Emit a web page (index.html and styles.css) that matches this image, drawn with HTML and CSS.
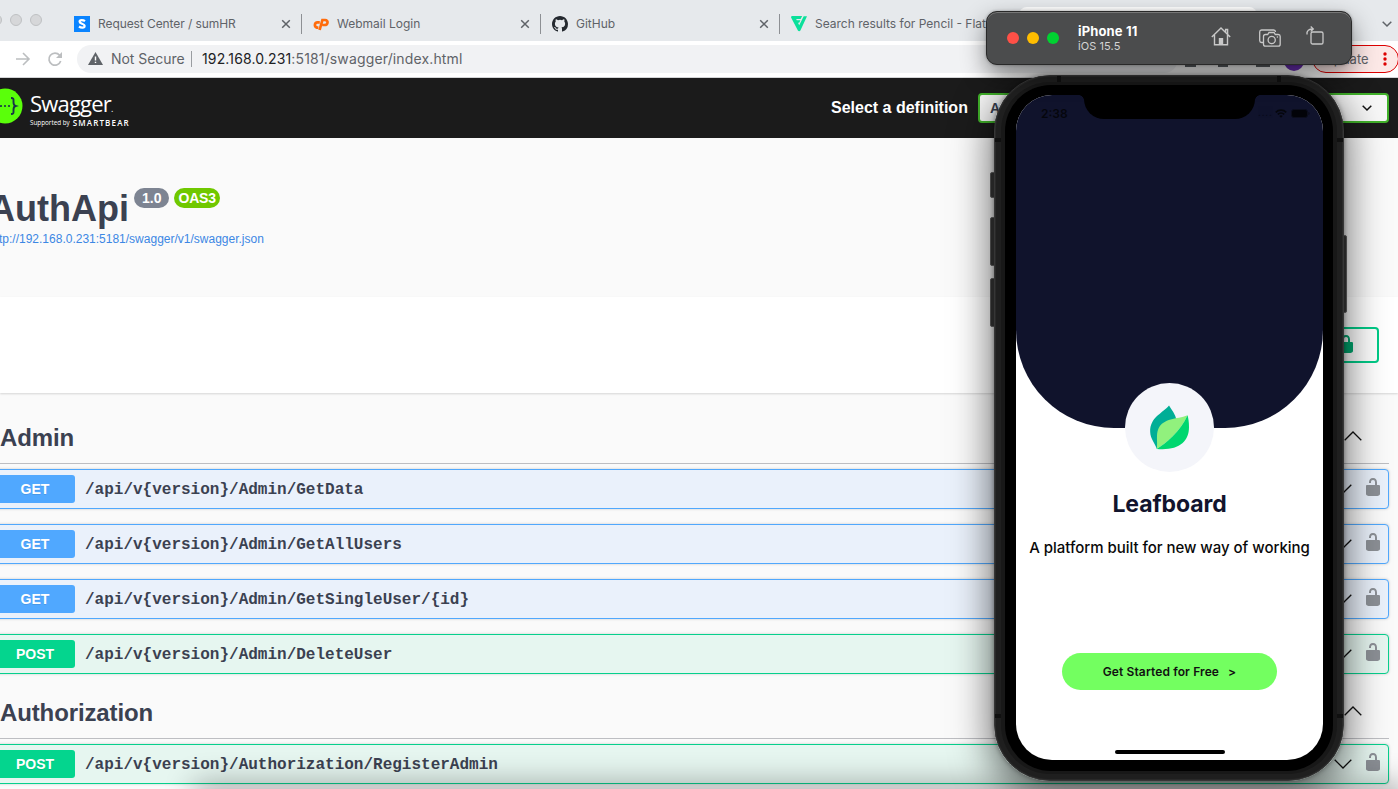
FILE: index.html
```html
<!DOCTYPE html>
<html lang="en">
<head>
<meta charset="utf-8">
<title>Swagger UI</title>
<link rel="stylesheet" href="styles.css">
</head>
<body>
<svg class="defs" width="0" height="0">
  <symbol id="lock" viewBox="0 0 20 20"><path d="M15.8 8H14V5.6C14 2.7 12.7 1 10 1S6 2.7 6 5.6V6h2v-.8C8 3.8 8.700 3 10 3s2 .8 2 2.200V8H4c-.6 0-1 .6-1 1.200V17c0 .6.5 1.200 1.100 1.400L5.500 19h9l1.400-.6c.6-.2 1.100-.8 1.100-1.400V9.200C17 8.600 16.400 8 15.800 8z"/></symbol>
  <symbol id="down" viewBox="0 0 18 10"><path d="M.7.7 9 9 17.300.7" fill="none" stroke="#111" stroke-width="1.300"/></symbol>
  <symbol id="up" viewBox="0 0 18 10"><path d="M.7 9.300 9 1l8.300 8.300" fill="none" stroke="#111" stroke-width="1.300"/></symbol>
  <symbol id="close" viewBox="0 0 10 10"><path d="m1.200 1.200 7.600 7.600M8.800 1.200 1.200 8.800" fill="none" stroke="#5f6368" stroke-width="1.500"/></symbol>
</svg>

<div class="browser">
  <div class="tabs">
    <div class="lights"><i></i><i></i><i></i></div>
    <div class="tab first">
      <svg class="fav" viewBox="0 0 16 16"><path fill="#0a84ff" d="M0 0h16v16H0z"/><path d="M11 5.200C9 3.700 5.600 3.700 5.600 5.800 5.600 8 10.600 7.400 10.600 9.900c0 2.200-3.500 2.100-5.600.6" fill="none" stroke="#fff" stroke-width="2.200"/></svg>
      <span class="t1">Request Center / sumHR</span><svg class="x"><use href="#close"/></svg>
    </div>
    <div class="tab">
      <svg class="fav" viewBox="0 0 16 16"><g fill="none" stroke="#ff6c0c" stroke-width="2.700"><path d="M6.800 6.300H4.500a2.700 2.700 0 0 0-.6 5.300h1.500"/><path d="M6.600 14 9.400 4H12c3.800.1 3.100 5-.5 5H9.300"/></g></svg>
      <span class="t2">Webmail Login</span><svg class="x"><use href="#close"/></svg>
    </div>
    <div class="tab">
      <svg class="fav" viewBox="0 0 16 16"><path fill="#24292f" d="M8 0C3.580 0 0 3.580 0 8c0 3.540 2.290 6.530 5.470 7.590.4.070.55-.17.55-.38 0-.19-.01-.82-.01-1.490-2.010.37-2.530-.49-2.690-.94-.09-.23-.48-.94-.82-1.130-.28-.15-.68-.52-.01-.53.63-.01 1.080.58 1.230.82.72 1.210 1.870.87 2.330.66.07-.52.28-.87.51-1.070-1.780-.2-3.640-.89-3.640-3.950 0-.87.31-1.590.82-2.150-.08-.2-.36-1.020.08-2.120 0 0 .67-.21 2.200.82a7.600 7.600 0 0 1 4 0c1.530-1.040 2.200-.82 2.200-.82.44 1.100.16 1.920.08 2.120.51.56.82 1.270.82 2.150 0 3.070-1.870 3.750-3.650 3.950.29.25.54.73.54 1.480 0 1.070-.01 1.930-.01 2.200 0 .21.15.46.55.38A8.010 8.010 0 0 0 16 8c0-4.420-3.580-8-8-8z"/></svg>
      <span class="t3">GitHub</span><svg class="x"><use href="#close"/></svg>
    </div>
    <div class="tab">
      <svg class="fav" viewBox="0 0 16 16"><path fill="#0be09b" fill-rule="evenodd" d="M1.200 0h10L9.600 3H5.200l.6 1.300h3.600L8.200 6.700H7l1.200 2.600L12.700.200H16L9.400 14.400c-.5 1-2 1-2.500 0L.2 1.800C-.3.900.300 0 1.200 0Z"/></svg>
      <span class="t4">Search results for Pencil - Flat</span>
    </div>
    <div class="active-tab"></div>
    <svg class="tabmenu" viewBox="0 0 10 6"><path d="m.7.700 4.300 4.300L9.300.7" fill="none" stroke="#5f6368" stroke-width="1.500"/></svg>
  </div>

  <div class="toolbar">
    <svg class="fwd" viewBox="0 0 14 14"><path d="M0 7h13M7 1l6 6-6 6" fill="none" stroke="#bcbec0" stroke-width="1.600"/></svg>
    <svg class="reload" viewBox="0 0 14 14"><path d="M11.600 3.300A6 6 0 1 0 12.700 9" fill="none" stroke="#bcbec0" stroke-width="1.700"/><path fill="#bcbec0" d="M14 0v6H8z"/></svg>
    <div class="omnibox">
      <svg class="warn" viewBox="0 0 15 13"><path fill="#5f6368" d="M7.500 0 15 13H0z"/><path fill="#fff" d="M6.800 4.500h1.400v4H6.800zm0 5.200h1.400v1.400H6.800z"/></svg>
      <span class="ns">Not Secure</span><span class="bar"></span>
      <span class="url"><b>192.168.0.231</b>:5181/swagger/index.html</span>
    </div>
    <div class="extras"><i class="e1"></i><i class="e2"></i><i class="e3"></i><i class="avatar"></i></div>
    <div class="update"><span>Update</span><svg viewBox="0 0 4 14"><g fill="#d00"><circle cx="2" cy="2" r="1.700"/><circle cx="2" cy="7" r="1.700"/><circle cx="2" cy="12" r="1.700"/></g></svg></div>
  </div>

  <div class="topbar">
    <svg class="mark" viewBox="0 0 36 36"><circle cx="18" cy="18" r="17.500" fill="#5aff0a"/><g fill="none" stroke="#173647" stroke-width="1.900"><path d="M12 10c-3 0-2.500 1.500-2.500 4 0 2.800-.6 3.600-2 4 1.400.4 2 1.200 2 4 0 2.500-.5 4 2.500 4"/><path d="M24 10c3 0 2.500 1.500 2.500 4 0 2.800.6 3.600 2 4-1.400.4-2 1.200-2 4 0 2.500.5 4-2.500 4"/></g><g fill="#173647"><circle cx="14" cy="18" r="1.100"/><circle cx="18" cy="18" r="1.100"/><circle cx="22" cy="18" r="1.100"/></g></svg>
    <div class="brand"><div class="name">Swagger<small>.</small></div><div class="by"><span>Supported by</span><b>SMARTBEAR</b></div></div>
    <span class="label">Select a definition</span>
    <div class="select"><span>A</span><svg viewBox="0 0 10 6"><path d="M.7.700 5 5 9.300.7" fill="none" stroke="#111" stroke-width="1.500"/></svg></div>
  </div>

  <div class="info">
    <div class="titleline"><h1>AuthApi</h1><span class="ver">1.0</span><span class="ver oas">OAS3</span></div>
    <a class="json">http://192.168.0.231:5181/swagger/v1/swagger.json</a>
  </div>

  <div class="scheme"><div class="authorize"><svg><use href="#lock"/></svg></div></div>

  <main>
    <h2 class="tag"><span>Admin</span><svg><use href="#up"/></svg></h2>
    <div class="ops">
      <div class="op get"><span class="method">GET</span><span class="path">/api/v{version}/Admin/GetData</span><svg class="arrow"><use href="#down"/></svg><svg class="lock"><use href="#lock"/></svg></div>
      <div class="op get"><span class="method">GET</span><span class="path">/api/v{version}/Admin/GetAllUsers</span><svg class="arrow"><use href="#down"/></svg><svg class="lock"><use href="#lock"/></svg></div>
      <div class="op get"><span class="method">GET</span><span class="path">/api/v{version}/Admin/GetSingleUser/{id}</span><svg class="arrow"><use href="#down"/></svg><svg class="lock"><use href="#lock"/></svg></div>
      <div class="op post"><span class="method">POST</span><span class="path">/api/v{version}/Admin/DeleteUser</span><svg class="arrow"><use href="#down"/></svg><svg class="lock"><use href="#lock"/></svg></div>
    </div>
    <h2 class="tag second"><span>Authorization</span><svg><use href="#up"/></svg></h2>
    <div class="ops">
      <div class="op post"><span class="method">POST</span><span class="path">/api/v{version}/Authorization/RegisterAdmin</span><svg class="arrow"><use href="#down"/></svg><svg class="lock"><use href="#lock"/></svg></div>
    </div>
  </main>
</div>
<div class="bottom-shade"></div>

<div class="phone">
  <i class="key k1"></i><i class="key k2"></i><i class="key k3"></i><i class="key k4"></i>
  <div class="frame">
    <i class="seam a"></i><i class="seam b"></i><i class="seam c"></i><i class="seam d"></i><i class="seam e"></i><i class="seam f"></i>
    <div class="bezel">
      <div class="screen">
        <div class="hero">
          <span class="time">2:38</span><span class="cell">....</span>
          <svg class="wifi" viewBox="0 0 12 9"><g fill="none" stroke="#05060c" stroke-width="1.700"><path d="M.8 3.300a7.500 7.500 0 0 1 10.400 0M2.800 5.400a4.600 4.600 0 0 1 6.400 0"/></g><path fill="#05060c" d="M4.300 7a2.500 2.500 0 0 1 3.400 0L6 8.800z"/></svg>
          <svg class="battery" viewBox="0 0 19 9"><rect x=".5" y=".5" width="16" height="8" rx="2.500" fill="#020308" stroke="#0b0d1c"/><path d="M17.500 3v3c1.300-.5 1.300-2.500 0-3" fill="#070810"/></svg>
          <div class="notch"></div>
        </div>
        <div class="badge"><svg viewBox="0 0 40 45"><path fill="#00ae96" d="M19.500 0C13 8-.3 12 .2 27 .4 34 5 38 7 44.500L27 14C26 9 22.500 5 19.500 0Z"/><path fill="#91f17d" d="M38.500 10C27 14.500 14 12.500 8.500 24 6 30 8 37 7 44.500 16 39 31 27 38.500 10Z"/><path fill="#00d76f" d="M38.500 10C31 27 16 39 7 44.500c22 2 33-7 33-22.500 0-5-.6-8.500-1.500-12Z"/></svg></div>
        <div class="appname">Leafboard</div>
        <div class="tagline">A platform built for new way of working</div>
        <div class="cta"><span>Get Started for Free</span><span>&gt;</span></div>
        <div class="homebar"></div>
      </div>
    </div>
  </div>
</div>

<div class="simbar">
  <div class="dots"><i></i><i></i><i></i></div>
  <div class="device"><b>iPhone 11</b><span>iOS 15.5</span></div>
  <svg class="s1" viewBox="0 0 20 19"><path d="M.8 10 10 1l9.200 9M3.500 8v9.700h13V8M14.600 5V2.500h2v4.400" fill="none" stroke="#c8c8c8" stroke-width="1.400"/><path d="M7.800 11h4.400v7H7.800z" fill="#c8c8c8"/></svg>
  <svg class="s2" viewBox="0 0 22 18"><g fill="none" stroke="#c8c8c8" stroke-width="1.300"><path d="M4 13.500H2.600A2 2 0 0 1 .7 11.500V3A2 2 0 0 1 2.600 1h12A2 2 0 0 1 16.500 3"/><path d="M6.500 5.500h2.200l1.300-2h5l1.300 2h3A2 2 0 0 1 21.200 7.500v7.700a2 2 0 0 1-2 2H6.500a2 2 0 0 1-2-2V7.500a2 2 0 0 1 2-2Z"/><circle cx="12.700" cy="11" r="3.600"/></g><circle cx="18.400" cy="8" r=".8" fill="#c8c8c8"/></svg>
  <svg class="s3" viewBox="0 0 18 19"><g fill="none" stroke="#c8c8c8" stroke-width="1.300"><rect x="5" y="6" width="12" height="12" rx="1.600"/><path d="M1 8.500C.5 4.500 3 3 7 3M4.700.6 7.300 3 4.700 5.400"/></g></svg>
</div>
</body>
</html>
```
FILE: styles.css
```css
* { box-sizing: border-box; }
html, body { margin: 0; height: 100%; overflow: hidden; }
body { position: relative; background: #fafafa; font-family: "Liberation Sans", sans-serif; color: #3b4151; }
svg { display: block; flex: none; overflow: visible; }
.defs { position: absolute; }
.browser { width: 1398px; height: 789px; overflow: hidden; }

.tabs { display: flex; align-items: flex-start; height: 41px; background: #e6e9ec; position: relative; font: 12px Inter, sans-serif; color: #5f6368; }
.lights { display: flex; gap: 8px; margin: 14px 0 0 -10px; width: 52px; flex: none; }
.lights i { width: 12px; height: 12px; border-radius: 50%; background: #d6d7d9; border: 1px solid #bfc1c3; flex: none; }
.tab { display: flex; align-items: center; width: 239px; height: 20px; margin-top: 14px; padding: 0 10px 0 11px; border-left: 1px solid #8d9094; flex: none; }
.tab.first { width: 259px; border-left-color: transparent; padding-left: 31px; }
.tab span { margin-left: 8px; white-space: nowrap; flex: 1; line-height: 20px; }
.fav { width: 16px; height: 16px; }
.x { width: 10px; height: 10px; }
.active-tab { position: absolute; left: 1019px; top: 7px; width: 238px; height: 34px; background: #fff; border-radius: 8px 8px 0 0; }
.tabmenu { position: absolute; left: 1382px; top: 21px; width: 10px; height: 6px; }
.t1 { letter-spacing: -.08px; }

.toolbar { display: flex; align-items: center; height: 37px; background: #fff; border-bottom: 1px solid #d3d4d6; font: 14px Inter, sans-serif; color: #5f6368; padding-left: 16px; }
.fwd { width: 14px; height: 14px; }
.reload { width: 14px; height: 14px; margin-left: 18px; }
.omnibox { display: flex; align-items: center; width: 1101px; height: 28px; margin-left: 15px; padding: 0 0 1px 11px; border-radius: 14px; background: #f1f2f4; flex: none; }
.warn { width: 15px; height: 13px; }
.ns { margin-left: 8px; width: 80px; white-space: nowrap; letter-spacing: -.05px; }
.bar { width: 1px; height: 16px; background: #9a9da1; margin-right: 10px; }
.url { white-space: nowrap; letter-spacing: .14px; }
.url b { font-weight: 400; color: #202124; }
.extras { display: flex; align-items: flex-end; height: 22px; margin-left: 7px; width: 128px; flex: none; }
.extras i { height: 3px; background: #5f6368; }
.e1 { width: 11px; margin-bottom: 3px; }
.e2 { width: 10px; margin: 0 0 3px 22px; }
.e3 { width: 14px; margin: 0 0 3px 28px; }
.extras .avatar { width: 20px; height: 20px; border-radius: 50%; background: #6b2fb3; margin: 0 0 -1px 14px; }
.update { display: flex; align-items: center; width: 87px; height: 28px; border: 1px solid #d00; border-radius: 14px; background: #fce8e6; font-size: 13px; margin-left: -1px; padding-left: 11px; flex: none; }
.update svg { width: 4px; height: 14px; margin-left: 14px; }

.topbar { display: flex; align-items: center; height: 60px; background: #1b1b1b; color: #fff; }
.mark { width: 36px; height: 36px; margin: -5px 0 0 -13px; }
.brand { margin-left: 7px; width: 801px; padding-top: 6px; font-family: "Open Sans", sans-serif; }
.name { font-size: 22px; line-height: 21px; letter-spacing: -.8px; height: 23px; }
.name small { font-size: 9px; }
.by { display: flex; gap: 3px; font-size: 6.300px; line-height: 10px; height: 12px; margin-top: 1px; align-items: center; }
.by b { font-size: 8px; letter-spacing: 1.150px; font-weight: 600; }
.label { width: 137px; font-size: 16px; font-weight: 700; white-space: nowrap; }
.select { display: flex; align-items: center; justify-content: space-between; width: 411px; height: 30px; margin-left: 10px; padding: 0 15px 0 10px; border: 2px solid #41b12a; border-radius: 4px; background: #f7f7f7; font-size: 14px; font-weight: 700; color: #3b4151; flex: none; }
.select svg { width: 10px; height: 6px; }

.info { height: 159px; padding: 48px 0 0; margin-left: -11px; }
.titleline { display: flex; align-items: flex-start; height: 44px; }
h1 { margin: 0; font-size: 36px; line-height: 45px; width: 140px; }
.ver { height: 20px; margin: 2px 0 0 5px; padding: 0 8px; border-radius: 10px; background: #7d8492; color: #fff; font-size: 14px; font-weight: 700; line-height: 21px; }
.oas { background: #70c800; margin-left: 5px; padding: 0 4px; letter-spacing: -.2px; }
.json { display: block; font-size: 12px; line-height: 18px; color: #3c87e4; }
.scheme { height: 96px; background: #fff; box-shadow: 0 1px 2px rgba(0,0,0,.15); padding: 30px 19px 0 0; }
.authorize { display: flex; align-items: center; justify-content: flex-end; width: 130px; height: 36px; margin-left: auto; padding: 0 21px; border: 2px solid #00cc88; border-radius: 4px; }
.authorize svg { width: 20px; height: 20px; margin-top: -2px; fill: #00a870; }
.tag { display: flex; align-items: center; justify-content: space-between; margin: 0 9px 5px 0; padding: 19px 27px 0 0; height: 71px; border-bottom: 1px solid #bdbec2; font-size: 24px; letter-spacing: -.12px; }
.tag.second { height: 65px; padding-top: 13px; }
.tag svg { width: 18px; height: 10px; margin-top: -4px; }
.ops { display: flex; flex-direction: column; gap: 15px; margin: 0 9px 0 -11px; }
.op { display: flex; align-items: center; height: 40px; padding: 0 5px; border: 1px solid; border-radius: 4px; box-shadow: 0 0 3px rgba(0,0,0,.19); }
.get { background: #eaf1fb; border-color: #50a8fd; --m: #50a8ff; }
.post { background: #e6f6f0; border-color: #06d08d; --m: #04d58e; }
.method { width: 80px; height: 28px; border-radius: 3px; background: var(--m); color: #fff; text-align: center; font-size: 14px; line-height: 28px; font-weight: 700; text-shadow: 0 1px 0 rgba(0,0,0,.1); }
.path { margin-left: 10px; padding-top: 1px; flex: 1; font: 700 16px "Liberation Mono", monospace; }
.arrow { width: 18px; height: 10px; }
.lock { width: 20px; height: 20px; margin: -5px 0 0 11px; fill: #8c9096; }
.bottom-shade { position: absolute; left: 200px; right: 0; top: 789px; height: 20px; box-shadow: 0 0 30px 6px rgba(0,0,0,.32); }

.phone { position: absolute; left: 994px; top: 75px; width: 350px; height: 706px; border-radius: 56px; box-shadow: 0 12px 38px 4px rgba(0,0,0,.55), 0 0 5px rgba(0,0,0,.4); }
.key { position: absolute; background: #252525; border: 1px solid #454545; border-radius: 2px; width: 6px; left: -4px; }
.k1 { top: 97px; height: 26px; }
.k2 { top: 142px; height: 49px; }
.k3 { top: 203px; height: 49px; }
.k4 { left: auto; right: -3px; top: 160px; height: 78px; }
.frame { position: relative; height: 100%; padding: 9px 10px; border: 1px solid #363636; border-radius: 56px; background: #181818; box-shadow: inset 0 0 0 1px #292929, inset 0 0 0 6px #1f1f1f; }
.seam { position: absolute; width: 4px; height: 6px; background: #101010; }
.a { left: 62px; top: 0; }
.b { right: 62px; top: 0; }
.c, .d, .e, .f { width: 6px; height: 4px; }
.c { left: 0; top: 62px; }
.d { right: 0; top: 62px; }
.e { left: 0; bottom: 62px; }
.f { right: 0; bottom: 62px; }
.bezel { position: relative; height: 100%; padding: 10px 11px 11px; background: #000; border-radius: 46px; }
.screen { position: relative; display: flex; flex-direction: column; align-items: center; width: 307px; height: 665px; background: #fff; border-radius: 36px; overflow: hidden; }
.hero { position: relative; width: 307px; height: 332.500px; flex: none; border-radius: 0 0 98px 98px; background: #10132c; color: #05060c; font-family: Inter, sans-serif; }
.notch { position: absolute; left: 68px; top: -1px; width: 171px; height: 25px; border-radius: 0 0 20px 20px; background: #000; }
.notch::before, .notch::after { content: ""; position: absolute; top: 1px; width: 5px; height: 5px; }
.notch::before { left: -5px; background: radial-gradient(circle at 0 100%, transparent 4.500px, #000 5px); }
.notch::after { right: -5px; background: radial-gradient(circle at 100% 100%, transparent 4.500px, #000 5px); }
.time { position: absolute; left: 25px; top: 11px; font-size: 12px; line-height: 16px; font-weight: 600; }
.cell { position: absolute; left: 242px; top: 9px; font-size: 10px; letter-spacing: .8px; line-height: 16px; opacity: .7; }
.wifi { position: absolute; left: 259px; top: 14px; width: 12px; height: 9px; }
.battery { position: absolute; left: 275px; top: 14px; width: 19px; height: 9px; }
.badge { display: grid; place-items: center; position: relative; width: 89px; height: 89px; margin-top: -44.500px; border-radius: 50%; background: #f4f5fa; flex: none; }
.badge svg { width: 39px; height: 45px; margin-right: 1px; }
.appname { margin-top: 17px; font: 650 23px/30px Inter, sans-serif; color: #12142d; letter-spacing: -.08px; }
.tagline { margin-top: 19px; font: 500 15px/20px Inter, sans-serif; color: #090909; white-space: nowrap; letter-spacing: -.03px; }
.cta { display: flex; align-items: center; justify-content: center; gap: 9px; width: 215px; height: 37px; margin-top: 95px; border-radius: 19px; background: #73ff60; color: #111; font: 600 12px Inter, sans-serif; letter-spacing: .12px; flex: none; }
.homebar { width: 110px; height: 4px; margin-top: 60px; border-radius: 2px; background: #000; flex: none; }

.simbar { position: absolute; left: 986px; top: 11px; width: 366px; height: 54px; display: flex; align-items: center; padding-left: 20px; border: 1px solid #292929; border-radius: 11px; background: #4b4c4d; box-shadow: inset 0 1px 0 #777, 0 10px 24px rgba(0,0,0,.45), 0 0 3px rgba(0,0,0,.3); font-family: Inter, sans-serif; color: #d4d4d4; }
.dots { display: flex; gap: 8px; }
.dots i { width: 12px; height: 12px; border-radius: 50%; background: #ff5047; }
.dots i:nth-child(2) { background: #ffbd00; }
.dots i:nth-child(3) { background: #00d231; }
.device { display: flex; flex-direction: column; width: 133px; margin-left: 19px; font-size: 11px; line-height: 14px; letter-spacing: .08px; }
.device b { color: #fff; font-size: 13px; line-height: 16px; letter-spacing: .15px; }
.s1 { width: 20px; height: 19px; margin-top: -3px; }
.s2 { width: 22px; height: 18px; margin: -1px 0 0 28px; }
.s3 { width: 18px; height: 19px; margin: -5px 0 0 25px; }
```
